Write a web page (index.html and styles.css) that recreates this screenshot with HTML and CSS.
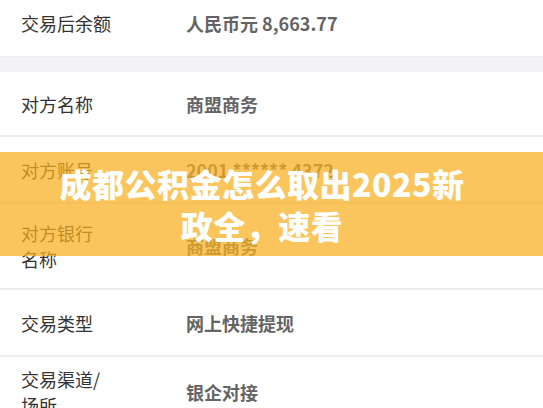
FILE: index.html
```html
<!DOCTYPE html>
<html lang="zh-CN">
<head>
<meta charset="utf-8">
<title>成都公积金怎么取出2025新政全，速看</title>
<link rel="stylesheet" href="styles.css">
</head>
<body>
<div class="page">
  <div class="list">
    <div class="row first">
      <div class="label">交易后余额</div>
      <div class="value">人民币元 8,663.77</div>
    </div>
  </div>
  <div class="gap"></div>
  <div class="list">
    <div class="row short">
      <div class="label">对方名称</div>
      <div class="value">商盟商务</div>
    </div>
    <div class="row">
      <div class="label">对方账号</div>
      <div class="value">2001 ****** 4372</div>
    </div>
    <div class="row">
      <div class="label two">对方银行<br>名称</div>
      <div class="value">商盟商务</div>
    </div>
    <div class="row">
      <div class="label">交易类型</div>
      <div class="value">网上快捷提现</div>
    </div>
    <div class="row last">
      <div class="label two">交易渠道/<br>场所</div>
      <div class="value">银企对接</div>
    </div>
  </div>
  <div class="banner">
    <h1 class="title">成都公积金怎么取出2025新<br>政全，速看</h1>
  </div>
</div>
</body>
</html>
```

FILE: styles.css
```css
html, body {
  margin: 0;
  padding: 0;
  background: #ffffff;
}
body {
  font-family: "Noto Sans CJK SC", "Noto Sans", sans-serif;
  width: 543px;
  height: 408px;
  overflow: hidden;
}
.page {
  position: relative;
  width: 543px;
  height: 408px;
  overflow: hidden;
}
.list {
  display: flex;
  flex-direction: column;
}
.row {
  display: flex;
  align-items: center;
  box-sizing: border-box;
  min-height: 67px;
  padding: 16px 0;
  border-bottom: 2px solid #ededed;
  font-size: 18px;
  line-height: 26px;
}
.row.first {
  margin-top: -10px;
  min-height: 67px;
  border-bottom: 1px solid #ececef;
}
.row.short {
  min-height: 65px;
}
.row.last {
  border-bottom: none;
  padding-top: 9px;
}
.label {
  width: 186px;
  padding-left: 21px;
  box-sizing: border-box;
  color: #333333;
  flex: none;
}
.label.two {
  line-height: 26px;
}
.value {
  color: #646464;
  font-weight: 700;
}
.gap {
  height: 15px;
  background: #f3f2f6;
}
.banner {
  position: absolute;
  left: 0;
  right: 0;
  top: 152px;
  height: 104px;
  background: rgba(248, 174, 30, 0.72);
  display: flex;
  align-items: center;
  justify-content: center;
  padding-right: 19px;
}
.title {
  margin: 0;
  color: #ffffff;
  font-size: 32px;
  font-weight: 900;
  line-height: 42px;
  letter-spacing: 0.5px;
  text-align: center;
}
```
